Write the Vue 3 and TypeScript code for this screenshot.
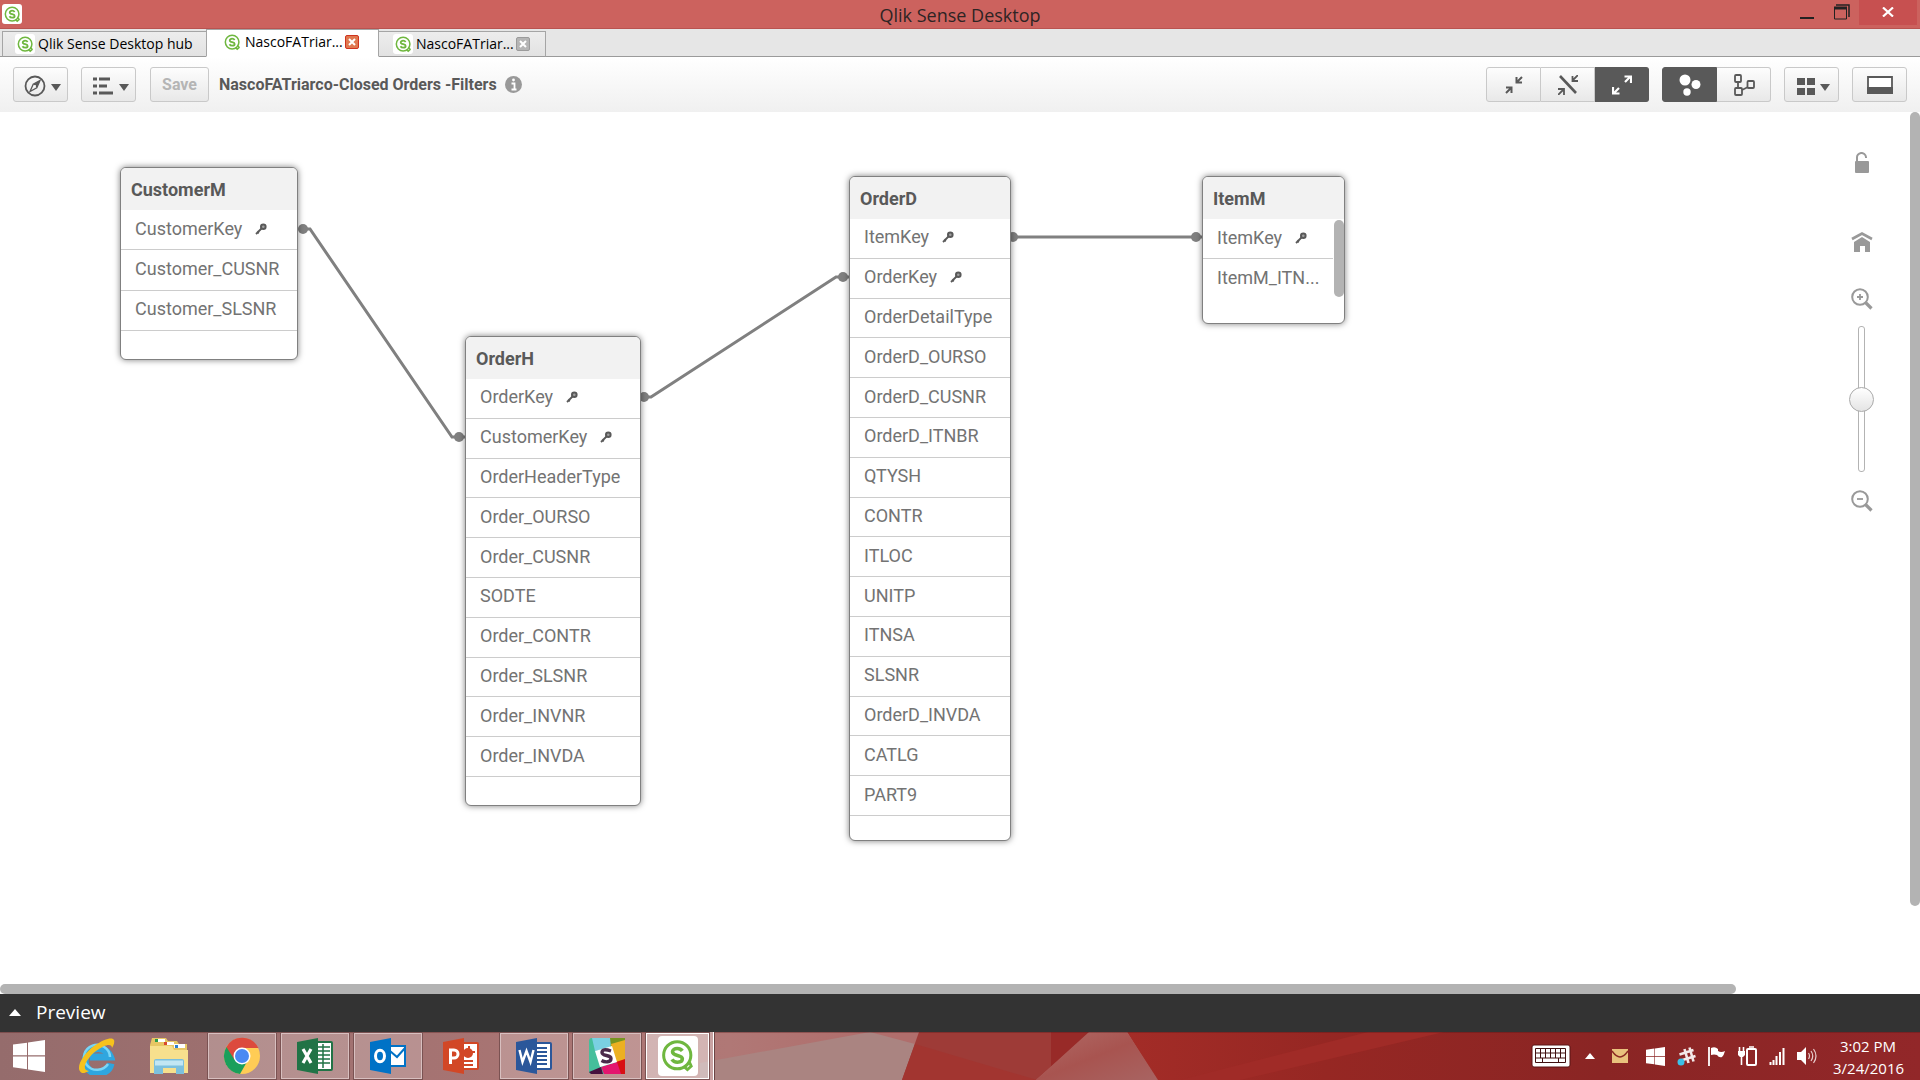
<script setup lang="ts">
import { ref } from 'vue'

interface Field {
  name: string
  key?: boolean
}

interface ModelTable {
  name: string
  x: number
  y: number
  width: number
  height: number
  tight?: boolean
  scroll?: boolean
  fields: Field[]
}

const fieldList = (names: string[], keys: string[]): Field[] =>
  names.map((name) => ({ name, key: keys.includes(name) }))

const tables: ModelTable[] = [
  {
    name: 'CustomerM', x: 120, y: 55, width: 178, height: 193,
    fields: fieldList(['CustomerKey', 'Customer_CUSNR', 'Customer_SLSNR'], ['CustomerKey']),
  },
  {
    name: 'OrderH', x: 465, y: 224, width: 176, height: 470,
    fields: fieldList(
      ['OrderKey', 'CustomerKey', 'OrderHeaderType', 'Order_OURSO', 'Order_CUSNR', 'SODTE',
        'Order_CONTR', 'Order_SLSNR', 'Order_INVNR', 'Order_INVDA'],
      ['OrderKey', 'CustomerKey'],
    ),
  },
  {
    name: 'OrderD', x: 849, y: 64, width: 162, height: 665, tight: true,
    fields: fieldList(
      ['ItemKey', 'OrderKey', 'OrderDetailType', 'OrderD_OURSO', 'OrderD_CUSNR', 'OrderD_ITNBR',
        'QTYSH', 'CONTR', 'ITLOC', 'UNITP', 'ITNSA', 'SLSNR', 'OrderD_INVDA', 'CATLG', 'PART9'],
      ['ItemKey', 'OrderKey'],
    ),
  },
  {
    name: 'ItemM', x: 1202, y: 64, width: 143, height: 148, tight: true, scroll: true,
    fields: fieldList(['ItemKey', 'ItemM_ITN...'], ['ItemKey']),
  },
]

const placement = (t: ModelTable) => ({
  left: `${t.x}px`,
  top: `${t.y}px`,
  width: `${t.width}px`,
  height: `${t.height}px`,
})

const zoom = ref(50)
</script>

<template>
  <svg class="symbols" aria-hidden="true">
    <symbol id="qlik" viewBox="0 0 18 18">
      <circle cx="8.6" cy="8.6" r="7.2" fill="none" stroke="#6fb73f" stroke-width="1.6" />
      <path d="M12.2 14.6l1.8 1.6 2-1.8-.9-2" fill="none" stroke="#6fb73f" stroke-width="1.5" />
      <path d="M11.3 6.3C10.6 5.3 9.7 5 8.6 5 7.2 5 6.1 5.7 6.1 6.8c0 2.5 5.2 1.3 5.2 3.7 0 1.2-1.2 1.8-2.6 1.8-1.3 0-2.3-.5-2.9-1.5" fill="none" stroke="#6fb73f" stroke-width="1.9" />
    </symbol>
    <symbol id="key" viewBox="0 0 12 12">
      <path d="M1 11l5.5-5.5M2 8.5l1.8 1.8" fill="none" stroke="#595959" stroke-width="1.8" />
      <circle cx="8.3" cy="3.7" r="2.3" fill="#a0a0a0" stroke="#595959" stroke-width="2" />
    </symbol>
    <symbol id="caret" viewBox="0 0 10 7"><path d="M0 0h10L5 7z" fill="#595959" /></symbol>
    <symbol id="winflag" viewBox="0 0 32 32">
      <path d="M0 4.600L14 2.700v12.600H0zM15 2.500L32 0v15.300H15zM0 16.500h14v12.700L0 27.300zM15 16.500h17V32l-17-2.500z" fill="#fff" />
    </symbol>
  </svg>

  <div class="screen">
    <header class="titlebar">
      <span class="logo app-logo"><svg><use href="#qlik" /></svg></span>
      <h1>Qlik Sense Desktop</h1>
      <div class="window-buttons">
        <button class="win" aria-label="Minimize"><svg width="14" height="16"><path d="M0 14h14" stroke="#222" stroke-width="2" /></svg></button>
        <button class="win" aria-label="Restore">
          <svg width="16" height="16"><path d="M2 1h13v12" fill="none" stroke="#222" stroke-width="1.5" /><path d="M.5 3.500h12v11.500H.5z" fill="none" stroke="#222" /><path d="M0 4h13" stroke="#222" stroke-width="3" /></svg>
        </button>
        <button class="win close" aria-label="Close"><svg width="12" height="10"><path d="M1 .5l10 9M11 .5l-10 9" stroke="#fff" stroke-width="2.2" /></svg></button>
      </div>
    </header>

    <nav class="tabs">
      <div class="tab hub">
        <span class="logo"><svg><use href="#qlik" /></svg></span>
        <a href="#hub">Qlik Sense Desktop hub</a>
      </div>
      <div class="tab active">
        <span class="logo"><svg><use href="#qlik" /></svg></span>
        <a href="#model">NascoFATriar...</a>
        <button class="tab-close" aria-label="Close tab"><svg width="8" height="8"><path d="M1 1l6 6M7 1l-6 6" stroke="#fff" stroke-width="2" /></svg></button>
      </div>
      <div class="tab last">
        <span class="logo"><svg><use href="#qlik" /></svg></span>
        <a href="#sheet">NascoFATriar...</a>
        <button class="tab-close" aria-label="Close tab"><svg width="8" height="8"><path d="M1 1l6 6M7 1l-6 6" stroke="#fff" stroke-width="2" /></svg></button>
      </div>
    </nav>

    <div class="toolbar">
      <button class="tool menu" aria-label="Navigation">
        <svg width="22" height="22"><circle cx="11" cy="11" r="9.5" fill="none" stroke="#595959" stroke-width="1.8" /><path d="M16 5.500l-3.200 7.300L6 16.500l3.200-7.300z" fill="none" stroke="#595959" stroke-width="1.3" /><path d="M16 5.500l-3.200 7.300-3.600-3.600z" fill="#595959" /><circle cx="11" cy="11" r="1" fill="#fff" /></svg>
        <svg class="caret"><use href="#caret" /></svg>
      </button>
      <button class="tool menu" aria-label="Menu">
        <svg width="22" height="18"><path d="M1 2h4M7 2h11M1 9h4M7 9h8M1 16h4M7 16h14" stroke="#595959" stroke-width="3" /></svg>
        <svg class="caret"><use href="#caret" /></svg>
      </button>
      <button class="tool save" disabled>Save</button>
      <h2>NascoFATriarco-Closed Orders -Filters</h2>
      <svg class="info" width="17" height="17"><circle cx="8.5" cy="8.5" r="8.5" fill="#999" /><path d="M6.500 7.500h3v5.500M6.500 13.500h5" fill="none" stroke="#fff" stroke-width="1.8" /><circle cx="8.5" cy="4" r="1.4" fill="#fff" /></svg>

      <div class="right-tools">
        <div class="group">
          <button class="tool" aria-label="Collapse all">
            <svg width="18" height="18" fill="none" stroke="#595959" stroke-width="2"><path d="M17 1l-5 5M11.500 1v5.500H17M1 17l5-5M1 11.500h5.500V17" /></svg>
          </button>
          <button class="tool" aria-label="Reduce all">
            <svg width="20" height="20" fill="none" stroke="#595959"><path d="M2 1l16 17" stroke-width="2.6" /><path d="M20 0l-5 5M14.500 1v5H20M0 20l5.500-5.500M0 14h6v6" stroke-width="1.8" /></svg>
          </button>
          <button class="tool on" aria-label="Expand all">
            <svg width="20" height="20" fill="none" stroke="#fff" stroke-width="2.2"><path d="M13 7l5-5M12.500 1.500h6.500V8M7 13l-5 5M1 12v6.500h6.500" /></svg>
          </button>
        </div>
        <div class="group">
          <button class="tool on" aria-label="Internal table view">
            <svg width="22" height="22" fill="#fff"><circle cx="6" cy="6" r="5.5" /><circle cx="17" cy="10.5" r="4.5" /><circle cx="8" cy="18" r="3.7" /></svg>
          </button>
          <button class="tool" aria-label="Source table view">
            <svg width="22" height="22" fill="none" stroke="#595959" stroke-width="1.8"><rect x="2" y="1" width="6" height="7" rx="1" /><rect x="2" y="14" width="7" height="7" rx="1" /><rect x="14.5" y="7" width="6.5" height="7" rx="1" /><path d="M5 8v6M9 16l6-3" /></svg>
          </button>
        </div>
        <button class="tool menu" aria-label="Layout">
          <svg width="18" height="18" fill="#595959"><path d="M0 1h8v7H0zM10 1h8v7h-8zM0 11h8v7H0zM10 11h8v7h-8z" /></svg>
          <svg class="caret"><use href="#caret" /></svg>
        </button>
        <button class="tool" aria-label="Preview panel">
          <svg width="26" height="18"><path d="M1 1h24v16H1z" fill="#fff" stroke="#595959" stroke-width="1.8" /><path d="M0 11h26v7H0z" fill="#595959" /></svg>
        </button>
      </div>
    </div>

    <main class="canvas">
      <svg class="links" fill="none" stroke="#808080" stroke-width="3">
        <path d="M303 117h7L452 325h14" />
        <path d="M644 285h7L836 165h14" />
        <path d="M1013 125h190" />
        <g fill="#808080" stroke="none">
          <circle cx="303" cy="117" r="5" /><circle cx="459" cy="325" r="5" />
          <circle cx="644" cy="285" r="5" /><circle cx="843" cy="165" r="5" />
          <circle cx="1013" cy="125" r="5" /><circle cx="1196" cy="125" r="5" />
        </g>
      </svg>

      <section
        v-for="t in tables"
        :key="t.name"
        class="node"
        :class="{ tight: t.tight, short: t.scroll }"
        :style="placement(t)"
      >
        <h3>{{ t.name }}</h3>
        <ul>
          <li v-for="f in t.fields" :key="f.name">
            <span>{{ f.name }}</span>
            <svg v-if="f.key" class="key"><use href="#key" /></svg>
          </li>
        </ul>
        <div v-if="t.scroll" class="node-scroll"></div>
      </section>

      <aside class="side">
        <button class="ghost lock" aria-label="Unlock">
          <svg width="16" height="22"><path d="M3 10V6a4.500 4.500 0 0 1 9-1v1" fill="none" stroke="#999" stroke-width="2" /><rect x="1" y="9" width="14" height="12" rx="1" fill="#999" /></svg>
        </button>
        <button class="ghost home" aria-label="Home">
          <svg width="22" height="22"><path d="M1 8l10-5.500L21 8" fill="none" stroke="#999" stroke-width="2.6" /><path d="M3 11l8-5 8 5v10h-5v-6H9v6H3z" fill="#999" /></svg>
        </button>
        <button class="ghost" aria-label="Zoom in">
          <svg width="22" height="22" fill="none" stroke="#999"><circle cx="9" cy="9" r="7.8" stroke-width="2" /><path d="M6 9h6M9 6v6" stroke-width="1.8" /><path d="M14.500 14.500l6 6" stroke-width="3.2" /></svg>
        </button>
        <input v-model="zoom" class="slider" type="range" min="0" max="100" aria-label="Zoom level" />
        <button class="ghost" aria-label="Zoom out">
          <svg width="22" height="22" fill="none" stroke="#999"><circle cx="9" cy="9" r="7.8" stroke-width="2" /><path d="M6 9h6" stroke-width="1.8" /><path d="M14.500 14.500l6 6" stroke-width="3.2" /></svg>
        </button>
      </aside>
      <div class="v-scroll"></div>
      <div class="h-scroll"></div>
    </main>

    <button class="preview">
      <svg width="12" height="7"><path d="M6 0l6 7H0z" fill="#fff" /></svg>
      <span>Preview</span>
    </button>

    <footer class="taskbar">
      <svg class="wallpaper" viewBox="0 0 1920 48" preserveAspectRatio="none">
        <defs>
          <linearGradient id="wall" gradientUnits="userSpaceOnUse" x1="0" y1="0" x2="1920" y2="0"><stop offset="0" stop-color="#956c6c" /><stop offset=".38" stop-color="#b07876" /><stop offset=".45" stop-color="#b06e6c" /></linearGradient>
          <linearGradient id="dark"><stop offset="0" stop-color="#a32c27" /><stop offset=".25" stop-color="#962723" /><stop offset=".6" stop-color="#8a2524" /><stop offset="1" stop-color="#922729" /></linearGradient>
          <linearGradient id="peak" x2="1" y2="1"><stop offset="0" stop-color="#b06a66" /><stop offset=".5" stop-color="#a85450" /><stop offset="1" stop-color="#a86462" /></linearGradient>
        </defs>
        <path d="M0 0h1920v48H0z" fill="url(#wall)" />
        <path d="M700 31L870 0l45 12-13 36H700z" fill="#aa8481" />
        <path d="M919 0h133v34l-16 14H902z" fill="#9e3b37" />
        <path d="M915 12l122 36H902z" fill="#a23530" />
        <path d="M1051 0h39l-39 35z" fill="#982a28" />
        <path d="M1127 0h793v48h-763z" fill="url(#dark)" />
        <path d="M1368 0h76l-204 48h-60z" fill="#a02b27" />
        <path d="M1089 0h38l31 48H1036z" fill="url(#peak)" />
        <path d="M0 .5h1920" stroke="#501818" stroke-opacity=".35" />
      </svg>

      <div class="apps">
        <button class="app start" aria-label="Start"><svg width="32" height="32"><use href="#winflag" /></svg></button>
        <button class="app" aria-label="Internet Explorer">
          <svg width="38" height="38" viewBox="0 0 38 38" fill="none"><path d="M34 26.500A13 12.500 0 1 1 33.500 20H13" stroke="#2fa6df" stroke-width="7" /><path d="M31 27A13 12.500 0 1 1 33 20" stroke="#79d6f7" stroke-width="2.5" /><path d="M5 36C-3 32 6 17 17 9S36 0 37 3s-1 6-2 8c0-5-7-4-16 3S3 33 12 34c-2 1-5 2.500-7 2z" fill="#f6c21c" /></svg>
        </button>
        <button class="app" aria-label="File Explorer">
          <svg width="40" height="38" viewBox="0 0 40 38"><path d="M3 1h14l2 3h9l2 3h8v29H1V8z" fill="#e7c765" /><path d="M6 2h10v3H6zM15 5h10v3H15zM25 7h11v4H25z" fill="#fff" /><path d="M6 2h3v3H6z" fill="#2a9d4a" /><path d="M15 5h3v3h-3z" fill="#d9482e" /><path d="M26 8h3v3h-3z" fill="#2a7fd0" /><path d="M1 9h22l2 4h14v23H1z" fill="#f7e08d" /><path d="M5 37V24q0-2 2-2h26q2 0 2 2v13h-8v-6H14v6z" fill="#7cc0dd" /><path d="M6 26h28" stroke="#c1e6f3" stroke-width="5" /></svg>
        </button>
        <button class="app open" aria-label="Google Chrome">
          <svg width="38" height="38" viewBox="0 0 38 38"><circle cx="19" cy="19" r="18" fill="#fc5" /><path d="M19 19L3.400 10A18 18 0 0 0 17 37l8-14z" fill="#1a9f5b" /><path d="M3.400 10a18 18 0 0 1 32 1H19l-8 11z" fill="#dc4a3d" /><circle cx="19" cy="19" r="8.5" fill="#fff" /><circle cx="19" cy="19" r="7" fill="#4a89f3" /></svg>
        </button>
        <button class="app open" aria-label="Excel">
          <svg width="36" height="36" viewBox="0 0 36 36"><rect x="19" y="4" width="16" height="28" rx="1" fill="#fff" stroke="#217346" stroke-width="2" /><path d="M21 9h12M21 13h12M21 17h12M21 21h12M21 25h12M26 6v24" stroke="#217346" stroke-width="1.5" /><path d="M0 4l21-4v36L0 32z" fill="#217346" /><path d="M6 11l8 14M14 11L6 25" stroke="#fff" stroke-width="3.2" /></svg>
        </button>
        <button class="app open" aria-label="Outlook">
          <svg width="36" height="36" viewBox="0 0 36 36"><rect x="19" y="8" width="16" height="20" fill="#fff" stroke="#0072c6" stroke-width="2" /><path d="M20 13l7 6 8-9" fill="none" stroke="#0072c6" stroke-width="2" /><path d="M0 4l21-4v36L0 32z" fill="#0072c6" /><ellipse cx="10" cy="18" rx="4.5" ry="5.7" fill="none" stroke="#fff" stroke-width="3" /></svg>
        </button>
        <button class="app" aria-label="PowerPoint">
          <svg width="36" height="36" viewBox="0 0 36 36"><rect x="19" y="5" width="16" height="26" rx="1" fill="#fff" stroke="#d24726" stroke-width="2" /><circle cx="25" cy="15" r="5" fill="#d24726" /><path d="M26 8v6h6M21 23h9M21 27h9" fill="none" stroke="#d24726" stroke-width="2" /><path d="M0 4l21-4v36L0 32z" fill="#d24726" /><path d="M7.500 26V12H11a4 4 0 0 1 0 8H8" fill="none" stroke="#fff" stroke-width="3" /></svg>
        </button>
        <button class="app open" aria-label="Word">
          <svg width="36" height="36" viewBox="0 0 36 36"><rect x="19" y="5" width="16" height="26" rx="1" fill="#fff" stroke="#2b579a" stroke-width="2" /><path d="M21 10h10M21 14h10M21 18h10M21 22h10M21 26h10" stroke="#2b579a" stroke-width="1.8" /><path d="M0 4l21-4v36L0 32z" fill="#2b579a" /><path d="M3.500 12l3 12 4-11 4 11 3-12" fill="none" stroke="#fff" stroke-width="2.4" /></svg>
        </button>
        <button class="app open" aria-label="Slack">
          <svg width="36" height="36" viewBox="0 0 36 36"><rect width="36" height="36" rx="3" fill="#45bf9b" /><path d="M3 0h21l-3 9L6 13z" fill="#7ad0e2" /><path d="M21 0h15v5l-14 4z" fill="#77941f" /><path d="M22 6l14-4v22l-9 1z" fill="#ecb021" /><path d="M27 24l9-3v15h-5z" fill="#d80f14" /><path d="M12 29l16-5 4 12H15z" fill="#e3166e" /><path d="M0 34l12-5 2 7H2z" fill="#45103e" /><path d="M6 13l17-5 5 16-17 5z" fill="#fff" /><path d="M22 13q-9-3-9 1.500c0 4 9 2 9 6 0 4-6 4-9.500 2" fill="none" stroke="#4b2a4a" stroke-width="3.4" /></svg>
        </button>
        <button class="app open current" aria-label="Qlik Sense"><span class="tile"><svg width="34" height="34"><use href="#qlik" /></svg></span></button>
      </div>

      <div class="tray">
        <svg width="40" height="24"><rect x="1" y="1" width="38" height="22" rx="2" fill="#fff" stroke="#5a1414" /><path d="M4.500 4.500h30v14h-30zM4.500 9h30M4.500 14h30M9.500 4.500V14M14.500 4.500V14M19.500 4.500V14M24.500 4.500V14M29.500 4.500V14M11.500 14v5M27.500 14v5" fill="none" stroke="#401010" /></svg>
        <svg class="up" width="10" height="6"><path d="M5 0l5 6H0z" fill="#fff" /></svg>
        <svg class="mail" width="16" height="14"><path d="M0 0h16v14H0z" fill="#e9c27d" /><path d="M0 2q8 12 16 0" fill="none" stroke="#8b2a22" stroke-width="1.5" /></svg>
        <svg width="19" height="19" viewBox="0 0 32 32"><use href="#winflag" /></svg>
        <svg width="19" height="20" fill="none"><path d="M7.500 3l4 14M12.500 1.500l4 14M2.500 8.500l14-4.500M4 14.500l14.500-4.500" stroke="#f3e8e8" stroke-width="2.6" /><circle cx="4" cy="16" r="3.5" fill="#3cc1e8" /></svg>
        <svg width="18" height="20"><path d="M1 1v19" stroke="#fff" stroke-width="1.8" /><path d="M3 2q4-2 7 1v2q3 2 7 0-1 4-3 6-3 1-5-2-3-1-6 0z" fill="#fff" /></svg>
        <svg width="19" height="20" fill="none"><rect x="9" y="3" width="9" height="16" rx="1" stroke="#fff" stroke-width="2" /><path d="M11 1h5M1.500 1v5M5.500 1v5M3.500 9v10" stroke="#fff" stroke-width="1.6" /><path d="M0 5h7v4L5 11H2L0 9z" fill="#fff" /></svg>
        <svg width="16" height="18"><path d="M1.500 15v3M4.500 13v5M7.500 9v9M11 5v13M14.500 1v17" stroke="#fff" stroke-width="2" /></svg>
        <svg width="20" height="20" fill="none"><path d="M0 6h4l5-5v18l-5-5H0z" fill="#fff" /><path d="M11.500 7q2 3 0 6M14 5q3.500 5 0 10M16.500 3q5 7 0 14" stroke="#e9cccc" stroke-width="1.2" /></svg>
        <div class="clock"><time>3:02 PM</time><time>3/24/2016</time></div>
      </div>
    </footer>
  </div>
</template>

<style>
body {
  margin: 0;
  background: #fff;
  overflow: hidden;
}
</style>

<style scoped>
* {
  box-sizing: border-box;
}

.symbols {
  position: absolute;
  width: 0;
  height: 0;
}

.screen {
  display: flex;
  flex-direction: column;
  height: 100vh;
  font-family: Roboto, "Liberation Sans", sans-serif;
  color: #595959;
}

svg {
  display: block;
  flex: none;
}

button {
  padding: 0;
  border: 0;
  background: none;
  font: inherit;
  color: inherit;
}

h1, h2, h3, ul {
  margin: 0;
  padding: 0;
  font-weight: normal;
}

.logo {
  display: grid;
  place-items: center;
  width: 20px;
  height: 20px;
  border-radius: 3px;
  background: #fff;
}

.logo svg {
  width: 17px;
  height: 17px;
}

.titlebar {
  position: relative;
  display: flex;
  justify-content: space-between;
  height: 29px;
  background: #cc625e;
  border-bottom: 1px solid #b95350;
}

.app-logo {
  margin: 4px 0 0 2px;
}

h1 {
  position: absolute;
  left: 0;
  right: 0;
  font: 18px/30px "Open Sans", "Noto Sans", sans-serif;
  text-align: center;
  color: #2e2424;
}

.window-buttons {
  position: relative;
  display: flex;
  margin-right: 3px;
}

.win {
  display: flex;
  justify-content: center;
  width: 35px;
  height: 25px;
  padding-top: 4px;
}

.win.close {
  width: 58px;
  padding-top: 7px;
  background: #c75050;
}

.tabs {
  display: flex;
  align-items: flex-end;
  height: 28px;
  padding-left: 2px;
  background: #e6e6e6;
  box-shadow: inset 0 -1px #9a9a9a;
}

.tab {
  display: flex;
  align-items: center;
  height: 26px;
  border: 1px solid #a5a5a5;
  border-bottom-color: #9a9a9a;
  background: linear-gradient(#ededed, #e2e2e2);
  font: 14px/24px "Open Sans", "Noto Sans", sans-serif;
}

.tab a {
  margin-left: 3px;
  color: #000;
  text-decoration: none;
}

.tab.hub {
  width: 204px;
  padding-left: 12px;
  border-right: 0;
}

.tab.active {
  width: 173px;
  height: 28px;
  padding-left: 15px;
  padding-bottom: 2px;
  background: #fff;
  border-bottom-color: #fff;
}

.tab.last {
  width: 167px;
  padding-left: 14px;
  border-left: 0;
}

.tab-close {
  display: grid;
  place-items: center;
  width: 14px;
  height: 14px;
  margin-left: 2px;
  border: 1px solid #9b9b9b;
  border-radius: 2px;
  background: #b5b5b5;
}

.active .tab-close {
  border-color: #d0341f;
  background: #e07850;
}

.toolbar {
  display: flex;
  align-items: center;
  height: 55px;
  padding: 0 13px;
  background: linear-gradient(#fff, #f0f0f0);
}

.tool {
  display: flex;
  align-items: center;
  justify-content: center;
  gap: 5px;
  width: 55px;
  height: 35px;
  margin-right: 13px;
  border: 1px solid #c9c9c9;
  border-radius: 3px;
  background: linear-gradient(#fdfdfd, #e8e8e8);
}

.tool.menu {
  padding: 2px 0 0 4px;
}

.caret {
  width: 10px;
  height: 7px;
  margin-top: 3px;
}

.tool.save {
  width: 59px;
  margin: 0 10px 0 1px;
  font-size: 16px;
  font-weight: bold;
  color: #b5b5b5;
}

h2 {
  font-size: 16px;
  font-weight: bold;
}

.info {
  margin-left: 8px;
}

.right-tools {
  display: flex;
  gap: 13px;
  margin-left: auto;
}

.right-tools .tool {
  margin: 0;
}

.group {
  display: flex;
}

.group .tool:not(:first-child) {
  width: 54px;
  border-left: 0;
  border-top-left-radius: 0;
  border-bottom-left-radius: 0;
}

.group .tool:not(:last-child) {
  border-top-right-radius: 0;
  border-bottom-right-radius: 0;
}

.right-tools .tool.on {
  border-color: #595959;
  background: #595959;
}

.canvas {
  position: relative;
  flex: 1;
  background: #fff;
}

.links {
  position: absolute;
  inset: 0;
  width: 100%;
  height: 100%;
}

.node {
  position: absolute;
  display: flex;
  flex-direction: column;
  border: 1px solid #808080;
  border-radius: 6px;
  background: #fff;
  box-shadow: 0 0 6px rgba(0, 0, 0, 0.5);
  overflow: hidden;
}

.node h3 {
  flex: none;
  height: 42px;
  padding-left: 10px;
  background: #f2f2f2;
  font-size: 18px;
  font-weight: bold;
  line-height: 43px;
}

.node ul {
  display: flex;
  flex: 1;
  flex-direction: column;
  margin-bottom: 28px;
  list-style: none;
}

.node.tight ul {
  margin-bottom: 24px;
}

.node li {
  display: flex;
  flex: 1;
  align-items: center;
  gap: 13px;
  padding: 0 0 2px 14px;
  border-bottom: 1px solid #ccc;
  font-size: 18px;
  line-height: 24px;
  color: #737373;
}

.short li {
  margin-right: 11px;
}

.short li:last-child {
  border-bottom-color: #fff;
}

.key {
  width: 12px;
  height: 12px;
}

.node-scroll {
  position: absolute;
  top: 43px;
  right: 0;
  width: 10px;
  height: 77px;
  border-radius: 5px;
  background: #b3b3b3;
}

.side {
  position: absolute;
  top: 40px;
  right: 47px;
  display: flex;
  flex-direction: column;
  align-items: center;
  width: 22px;
}

.ghost.lock {
  margin-bottom: 57px;
}

.ghost.home {
  margin-bottom: 35px;
}

.slider {
  appearance: none;
  writing-mode: vertical-lr;
  width: 25px;
  height: 146px;
  margin: 16px 2px 18px 0;
  background: none;
}

.slider::-webkit-slider-runnable-track {
  width: 7px;
  border: 1px solid #b3b3b3;
  border-radius: 3px;
  background: #fff;
}

.slider::-webkit-slider-thumb {
  appearance: none;
  box-sizing: border-box;
  width: 25px;
  height: 25px;
  margin-left: -10px;
  border: 1px solid #aaa;
  border-radius: 50%;
  background: linear-gradient(#fff, #e4e4e4);
}

.v-scroll {
  position: absolute;
  top: 0;
  right: 0;
  width: 10px;
  height: 90%;
  border-radius: 5px;
  background: #b3b3b3;
}

.h-scroll {
  position: absolute;
  left: 0;
  bottom: 0;
  width: 90.4%;
  height: 10px;
  border-radius: 5px;
  background: #b3b3b3;
}

.preview {
  display: flex;
  align-items: center;
  gap: 15px;
  height: 38px;
  padding: 0 0 2px 9px;
  background: #333;
  font: 19px/36px "Open Sans", "Noto Sans", sans-serif;
  color: #fff;
}

.taskbar {
  position: relative;
  display: flex;
  justify-content: space-between;
  height: 48px;
}

.wallpaper {
  position: absolute;
  width: 100%;
  height: 100%;
}

.apps {
  position: relative;
  display: flex;
  gap: 3px;
}

.app {
  display: grid;
  place-items: center;
  width: 70px;
  height: 48px;
}

.app.start {
  width: 58px;
}

.app.open {
  border: 1px solid #d8bfbf;
  outline: 1px solid #7a5252;
  outline-offset: -1px;
  box-shadow: inset 0 0 0 1px #d8bfbf;
  background: rgba(255, 255, 255, 0.22);
}

.app.current {
  width: 65px;
  background: rgba(255, 255, 255, 0.45);
  box-shadow: inset 0 0 0 1px #fff, 3px 0 #c9a3a3, 4px 0 #fff, 5px 0 #6b4444;
}

.tile {
  display: grid;
  place-items: center;
  width: 40px;
  height: 40px;
  border-radius: 4px;
  background: #fff;
}

.tray {
  position: relative;
  display: flex;
  align-items: center;
  gap: 12px;
  padding-right: 17px;
}

.up {
  margin-left: 2px;
}

.mail {
  margin: 0 6px 0 5px;
}

.clock {
  display: flex;
  flex-direction: column;
  width: 70px;
  margin-left: 4px;
  padding-top: 2px;
  font: 15px/22px "Open Sans", "Noto Sans", sans-serif;
  text-align: center;
  white-space: nowrap;
  color: #fff;
}
</style>
